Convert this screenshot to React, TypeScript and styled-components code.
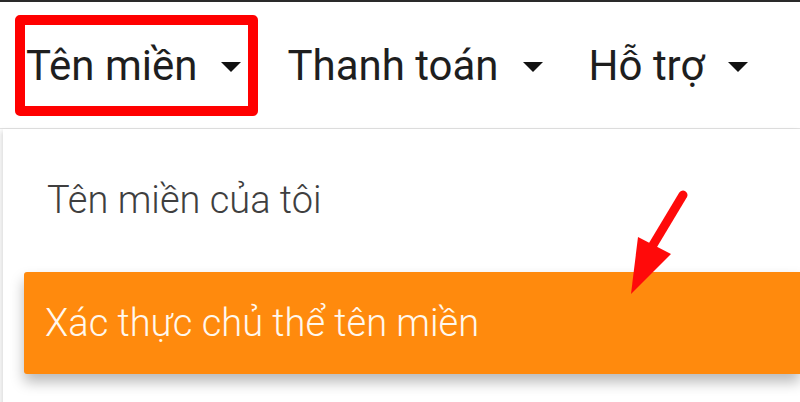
import React from "react";
import styled, { createGlobalStyle } from "styled-components";

const GlobalStyle = createGlobalStyle`
  html, body {
    margin: 0;
    padding: 0;
    background: #ffffff;
    overflow: hidden;
  }
  body {
    font-family: Roboto, "Liberation Sans", Arial, sans-serif;
  }
`;

const navItems = [
  { id: 1, label: "Tên miền", active: true },
  { id: 2, label: "Thanh toán", active: false },
  { id: 3, label: "Hỗ trợ", active: false },
];

const menuItems = [
  { id: 1, label: "Tên miền của tôi", active: false },
  { id: 2, label: "Xác thực chủ thể tên miền", active: true },
];

export default function App() {
  return (
    <Page>
      <GlobalStyle />
      <NavBar>
        {navItems.map((item) => (
          <NavItem key={item.id} $active={item.active}>
            <span>{item.label}</span>
            <Caret />
          </NavItem>
        ))}
        <NavEdge />
      </NavBar>
      <Dropdown>
        {menuItems.map((item) => (
          <MenuItem key={item.id} $active={item.active}>
            {item.label}
          </MenuItem>
        ))}
      </Dropdown>
      <Arrow viewBox="0 0 80 120" width="80" height="120">
        <line
          x1="63"
          y1="8"
          x2="33"
          y2="58"
          stroke="#ff0a0a"
          strokeWidth="9"
          strokeLinecap="round"
        />
        <polygon points="18,50 51,67 11,107" fill="#ff0a0a" />
      </Arrow>
    </Page>
  );
}

const Page = styled.div`
  position: relative;
  width: 800px;
  height: 402px;
  overflow: hidden;
  border-top: 2px solid #2a2a2a;
  box-sizing: border-box;
  background: #ffffff;
`;

const NavBar = styled.div`
  display: flex;
  align-items: center;
  gap: 18px;
  height: 127px;
  padding-left: 15px;
  border-bottom: 1px solid #e2e2e2;
  box-sizing: border-box;
  white-space: nowrap;
`;

const NavItem = styled.div<{ $active: boolean }>`
  display: flex;
  align-items: center;
  height: 101px;
  box-sizing: border-box;
  padding: 0 7px 0 1px;
  border: 10px solid ${(p) => (p.$active ? "#ff0000" : "transparent")};
  border-radius: 5px;
  font-size: 42px;
  color: #1e1e1e;
`;

const Caret = styled.i`
  display: inline-block;
  width: 0;
  height: 0;
  margin-left: 24px;
  margin-top: 4px;
  border-left: 10px solid transparent;
  border-right: 10px solid transparent;
  border-top: 10px solid #111111;
`;

const NavEdge = styled.div`
  width: 6px;
  height: 26px;
  margin-left: 25px;
  border-left: 3px solid #f2ddb0;
  border-radius: 50%;
`;

const Dropdown = styled.div`
  display: flex;
  flex-direction: column;
  gap: 21px;
  margin-left: 3px;
  padding-top: 20px;
  height: 300px;
  background: #ffffff;
  box-shadow: -2px 2px 5px rgba(0, 0, 0, 0.14);
`;

const MenuItem = styled.div<{ $active: boolean }>`
  display: flex;
  align-items: center;
  height: 102px;
  margin-left: 21px;
  padding-left: ${(p) => (p.$active ? "21px" : "23px")};
  border-radius: 3px 0 0 3px;
  font-size: 38px;
  font-weight: 300;
  color: ${(p) => (p.$active ? "#fff8ee" : "#3f3f3f")};
  background: ${(p) => (p.$active ? "#ff8a0d" : "transparent")};
  box-shadow: ${(p) =>
    p.$active ? "0 8px 14px rgba(0, 0, 0, 0.28)" : "none"};
`;

const Arrow = styled.svg`
  position: absolute;
  left: 620px;
  top: 185px;
  pointer-events: none;
`;
